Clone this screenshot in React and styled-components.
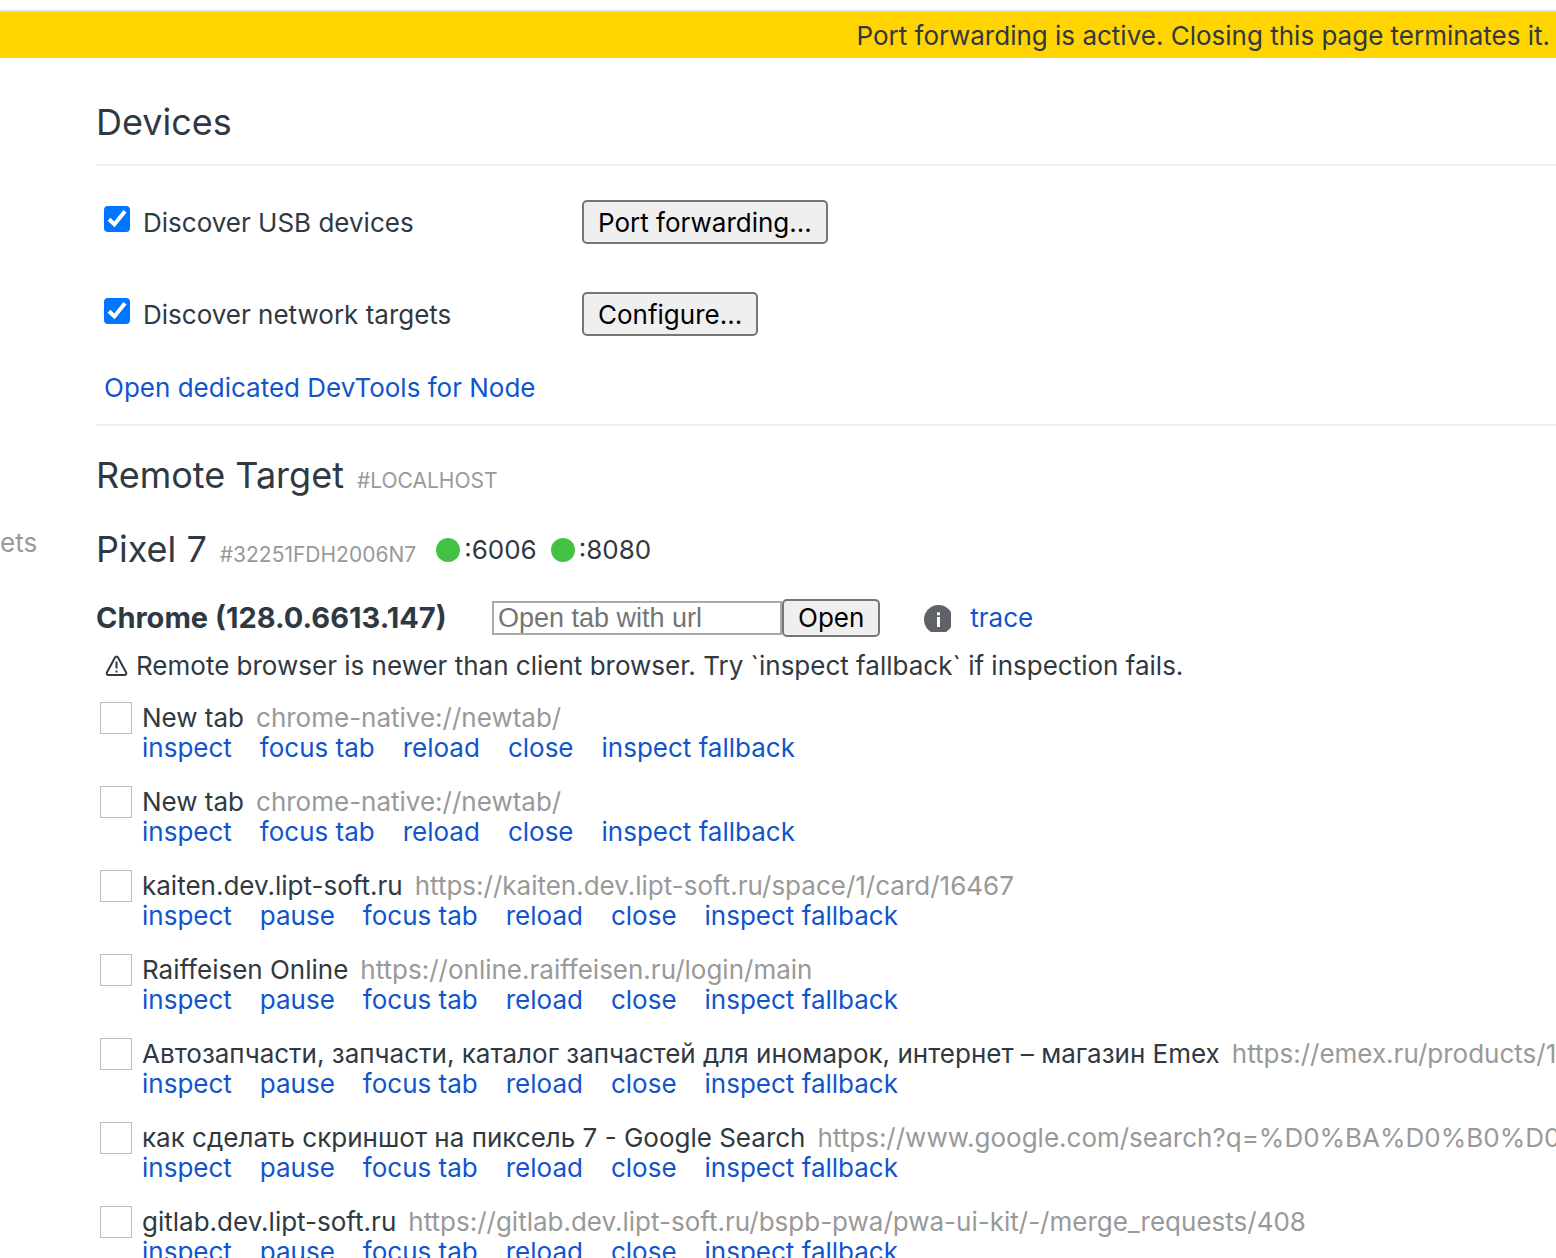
import * as React from 'react';
import styled, { createGlobalStyle } from 'styled-components';

const GlobalStyle = createGlobalStyle`
  * {
    box-sizing: border-box;
  }
  body {
    margin: 0;
    background: #fff;
    color: #303942;
    font-family: Inter, 'Liberation Sans', sans-serif;
    font-size: 26px;
    line-height: 30px;
  }
`;

const Page = styled.div`
  height: 100vh;
  overflow: hidden;
  padding-top: 10px;
`;

const Banner = styled.div`
  border-top: 2px solid #ddd;
  background: #ffd400;
  padding: 9px 6px 7px;
  text-align: right;
`;

const Layout = styled.div`
  display: grid;
  grid-template-columns: 96px minmax(0, 1fr);
`;

const Sidebar = styled.nav`
  padding-top: 470px;
`;

const NavItem = styled.a`
  color: #999;
  text-decoration: none;
`;

const Content = styled.main`
  white-space: nowrap;
`;

const Header = styled.h1`
  margin: 0;
  padding: 39px 0 17px;
  border-bottom: 2px solid #eee;
  font-size: 36px;
  font-weight: 400;
  line-height: 50px;
`;

const Settings = styled.section`
  padding: 34px 8px 21px;
  border-bottom: 2px solid #eee;
`;

const SettingRow = styled.div`
  display: grid;
  grid-template-columns: 478px auto;
  justify-content: start;
  align-items: center;
  height: 44px;
  margin-bottom: 48px;

  & + & {
    margin-bottom: 37px;
  }
`;

const SettingLabel = styled.label`
  display: flex;
  align-items: center;
  gap: 13px;
  padding-top: 2px;
  line-height: 42px;
`;

const Checkbox = styled.input`
  appearance: none;
  width: 26px;
  height: 26px;
  margin: 0 0 8px;
  border: 2px solid #767676;
  border-radius: 4px;

  &:checked {
    border: 0;
    background: #0075ff
      url("data:image/svg+xml,%3Csvg xmlns='http://www.w3.org/2000/svg' viewBox='0 0 26 26'%3E%3Cpath d='M5 13.2 10.4 18.4 21 5.2' fill='none' stroke='white' stroke-width='4'/%3E%3C/svg%3E");
  }
`;

const Button = styled.button`
  height: ${({ $small }) => ($small ? 38 : 44)}px;
  padding: ${({ $small }) => ($small ? 0 : 2)}px 14px 0;
  border: 2px solid #767676;
  border-radius: 5px;
  background: #efefef;
  color: #000;
  font: inherit;
`;

const Link = styled.a`
  color: #1155cc;
  text-decoration: none;
`;

const DeviceHeader = styled.header`
  display: flex;
  align-items: baseline;
  height: 74px;
  padding-top: 24px;
`;

const DeviceName = styled.h2`
  margin: 0 13px 0 0;
  font-size: 36px;
  font-weight: 400;
  line-height: 50px;
`;

const Serial = styled.span`
  margin-right: 20px;
  color: #999;
  font-size: 21px;
`;

const Port = styled.span`
  display: flex;
  align-items: center;
  gap: 4px;
  margin-right: 14px;

  &::before {
    content: '';
    width: 24px;
    height: 24px;
    border-radius: 50%;
    background: #42c142;
  }
`;

const BrowserHeader = styled.div`
  display: flex;
  align-items: center;
  height: 38px;
  margin-top: 25px;
`;

const BrowserName = styled.h3`
  width: 396px;
  margin: 0;
  font-size: 29px;
  font-weight: 700;
`;

const UrlInput = styled.input`
  width: 290px;
  height: 34px;
  padding: 0 4px;
  border: 2px solid #a9a9a9;
  background: #fff;
  font: 27px 'Liberation Sans', Arial, sans-serif;

  &::placeholder {
    color: #757575;
  }
`;

const InfoIcon = styled.svg`
  width: 27px;
  height: 27px;
  margin: 0 19px 0 44px;
`;

const Warning = styled.p`
  display: flex;
  align-items: center;
  gap: 8px;
  margin: 14px 0 21px;
  padding-left: 9px;
`;

const TargetList = styled.ul`
  margin: 0;
  padding: 0;
  list-style: none;
`;

const Target = styled.li`
  display: grid;
  grid-template-columns: 32px minmax(0, 1fr);
  column-gap: 10px;
  height: 84px;
  padding-left: 4px;
`;

const Favicon = styled.span`
  width: 32px;
  height: 32px;
  border: 1px solid #bdbdbd;
`;

const TargetInfo = styled.div`
  padding-top: 1px;
`;

const TargetName = styled.div`
  display: flex;
  gap: 12px;
  overflow: hidden;
`;

const TargetUrl = styled.span`
  color: #999;
`;

const Actions = styled.div`
  display: flex;
  gap: 28px;
`;

const tabActions = ['inspect', 'focus tab', 'reload', 'close', 'inspect fallback'];
const pageActions = ['inspect', 'pause', 'focus tab', 'reload', 'close', 'inspect fallback'];

const targets = [
  { name: 'New tab', url: 'chrome-native://newtab/', actions: tabActions },
  { name: 'New tab', url: 'chrome-native://newtab/', actions: tabActions },
  {
    name: 'kaiten.dev.lipt-soft.ru',
    url: 'https://kaiten.dev.lipt-soft.ru/space/1/card/16467',
    actions: pageActions,
  },
  {
    name: 'Raiffeisen Online',
    url: 'https://online.raiffeisen.ru/login/main',
    actions: pageActions,
  },
  {
    name: 'Автозапчасти, запчасти, каталог запчастей для иномарок, интернет – магазин Emex',
    url: 'https://emex.ru/products/1Z',
    actions: pageActions,
  },
  {
    name: 'как сделать скриншот на пиксель 7 - Google Search',
    url: 'https://www.google.com/search?q=%D0%BA%D0%B0%D0%B',
    actions: pageActions,
  },
  {
    name: 'gitlab.dev.lipt-soft.ru',
    url: 'https://gitlab.dev.lipt-soft.ru/bspb-pwa/pwa-ui-kit/-/merge_requests/408',
    actions: pageActions,
  },
];

const WarningIcon = () => (
  <svg width="23" height="22" viewBox="0 0 23 22" fill="none" stroke="#303942" aria-hidden="true">
    <path
      d="M10 2.6 2 17.2c-.8 1.5 0 2.8 1.6 2.8h15.8c1.6 0 2.4-1.3 1.6-2.8L13 2.6c-.8-1.4-2.2-1.4-3 0Z"
      strokeWidth="2"
    />
    <path d="M11.5 6.5v7M11.5 15.4v2" strokeWidth="2" />
  </svg>
);

const App = () => {
  const [discover, setDiscover] = React.useState({ usb: true, network: true });
  const [url, setUrl] = React.useState('');

  const handleToggle = (e) => {
    setDiscover({ ...discover, [e.target.id]: e.target.checked });
  };

  return (
    <Page>
      <GlobalStyle />
      <Banner>Port forwarding is active. Closing this page terminates it.</Banner>
      <Layout>
        <Sidebar>
          <NavItem href="#targets">ets</NavItem>
        </Sidebar>
        <Content>
          <Header>Devices</Header>
          <Settings>
            <SettingRow>
              <SettingLabel htmlFor="usb">
                <Checkbox type="checkbox" id="usb" checked={discover.usb} onChange={handleToggle} />
                Discover USB devices
              </SettingLabel>
              <Button type="button">Port forwarding...</Button>
            </SettingRow>
            <SettingRow>
              <SettingLabel htmlFor="network">
                <Checkbox
                  type="checkbox"
                  id="network"
                  checked={discover.network}
                  onChange={handleToggle}
                />
                Discover network targets
              </SettingLabel>
              <Button type="button">Configure...</Button>
            </SettingRow>
            <Link href="#node">Open dedicated DevTools for Node</Link>
          </Settings>

          <DeviceHeader>
            <DeviceName>Remote Target</DeviceName>
            <Serial>#LOCALHOST</Serial>
          </DeviceHeader>
          <DeviceHeader>
            <DeviceName>Pixel 7</DeviceName>
            <Serial>#32251FDH2006N7</Serial>
            <Port>:6006</Port>
            <Port>:8080</Port>
          </DeviceHeader>

          <BrowserHeader>
            <BrowserName>Chrome (128.0.6613.147)</BrowserName>
            <UrlInput
              type="text"
              aria-label="Open tab with url"
              placeholder="Open tab with url"
              value={url}
              onChange={(e) => setUrl(e.target.value)}
            />
            <Button type="button" $small>
              Open
            </Button>
            <InfoIcon viewBox="0 0 27 27" aria-hidden="true">
              <circle cx="14.5" cy="14.5" r="14.5" fill="#5f6368" />
              <path d="M13 7.2h3v3h-3zM13 12h3v10h-3z" fill="#fff" />
            </InfoIcon>
            <Link href="#trace">trace</Link>
          </BrowserHeader>
          <Warning>
            <WarningIcon />
            Remote browser is newer than client browser. Try `inspect fallback` if inspection fails.
          </Warning>

          <TargetList>
            {targets.map((target, idx) => (
              <Target key={`target ${idx + 1}`}>
                <Favicon />
                <TargetInfo>
                  <TargetName>
                    <span>{target.name}</span>
                    <TargetUrl>{target.url}</TargetUrl>
                  </TargetName>
                  <Actions>
                    {target.actions.map((action) => (
                      <Link key={action} href={`#${action.replace(' ', '-')}`}>
                        {action}
                      </Link>
                    ))}
                  </Actions>
                </TargetInfo>
              </Target>
            ))}
          </TargetList>
        </Content>
      </Layout>
    </Page>
  );
};

export default App;
